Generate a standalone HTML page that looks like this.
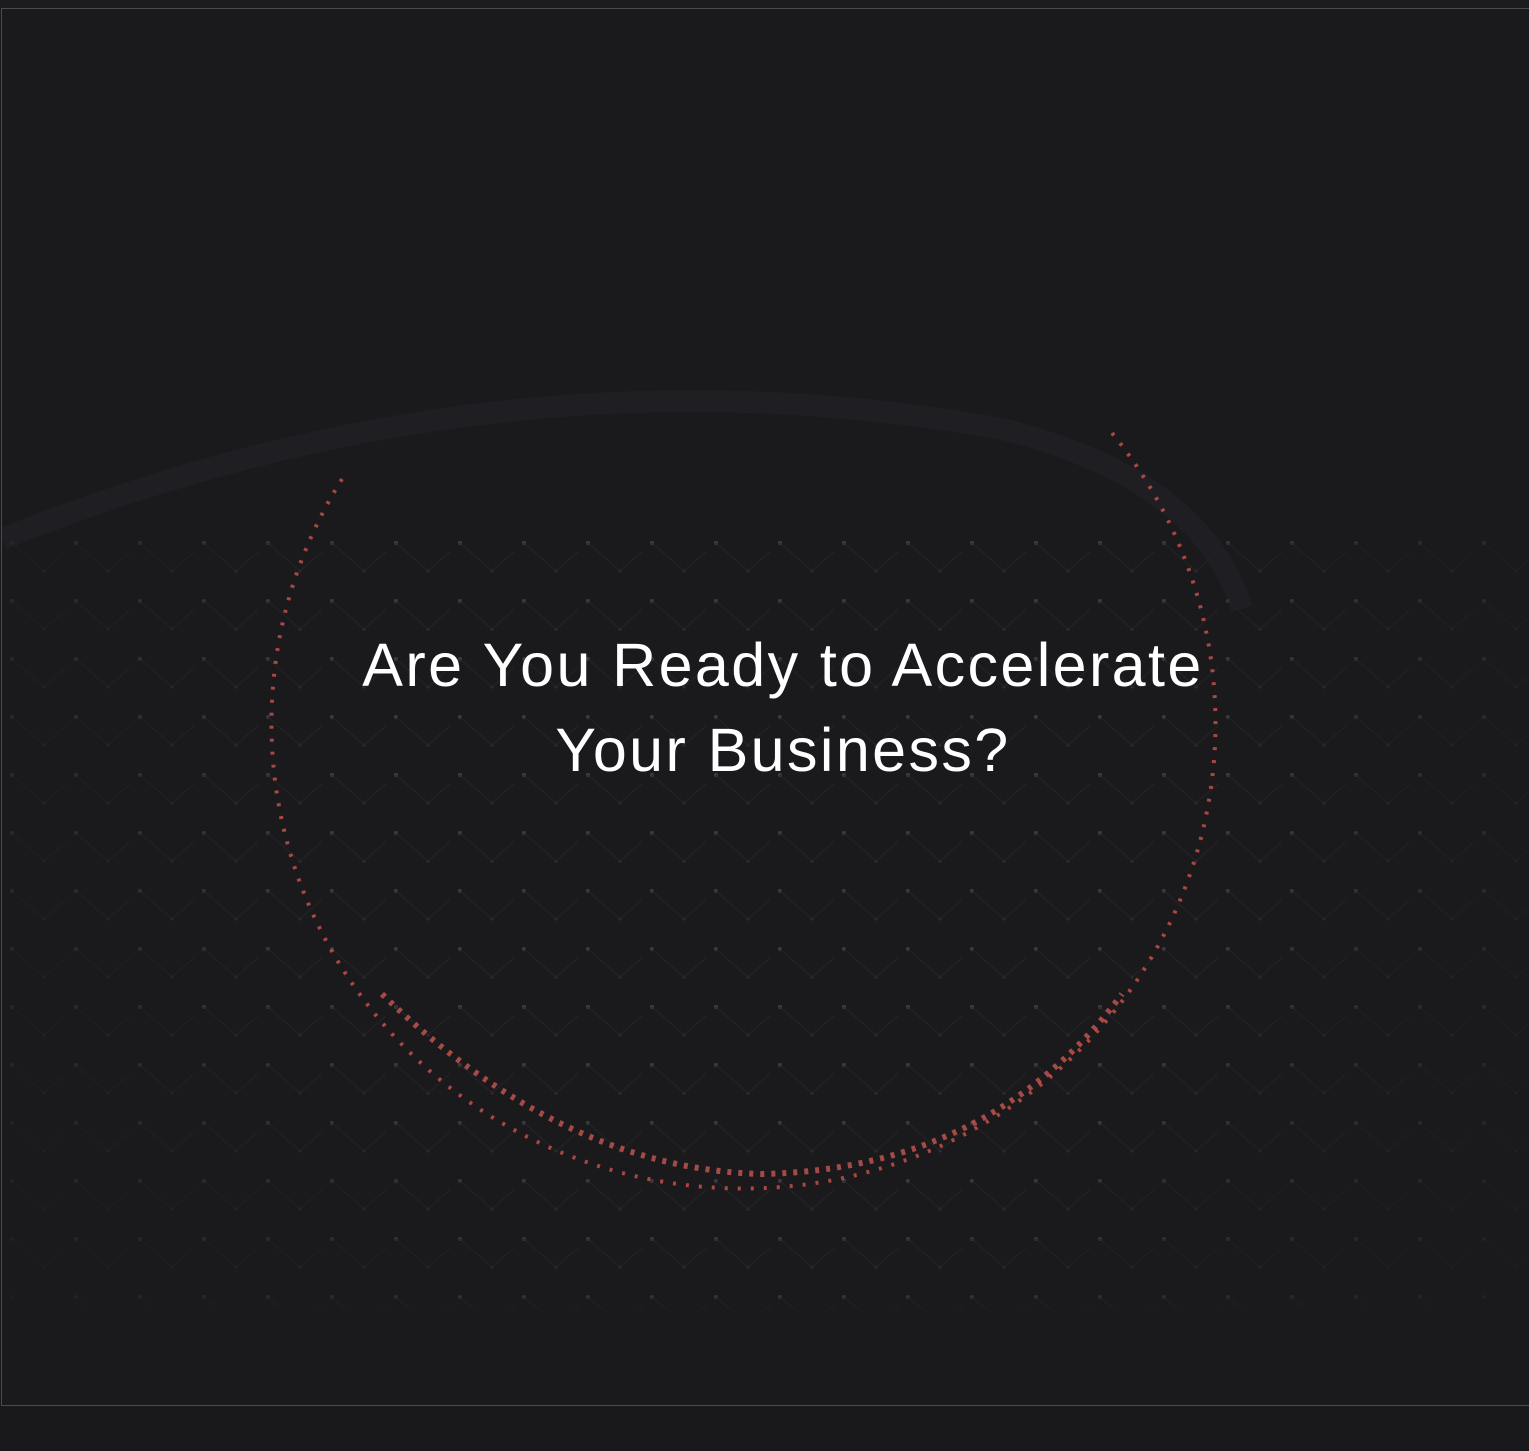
<!DOCTYPE html>
<html><head><meta charset="utf-8"><style>
html,body{margin:0;padding:0;background:#19191b;width:1529px;height:1451px;overflow:hidden}
.box{position:absolute;left:1px;top:8px;width:1528px;height:1396px;border-top:1px solid #4a4a4f;border-left:1px solid #4a4a4f;border-bottom:1px solid #4a4a4f;background:#1a191c;overflow:hidden}
.top{position:absolute;left:0;top:0;width:1529px;height:8px;background:#1c1c1e}
h1{position:absolute;left:0;top:614px;width:1562px;margin:0;text-align:center;font-family:"Liberation Sans",sans-serif;font-weight:400;font-size:61px;line-height:85px;color:#fff;letter-spacing:2.4px}
</style></head><body>
<div class="top"></div>
<div class="box">
<svg width="1528" height="1396" style="position:absolute;left:0;top:0">
<defs>
<pattern id="g" width="64" height="58" patternUnits="userSpaceOnUse">
<circle cx="10" cy="12" r="2" fill="#48484c"/>
<circle cx="42" cy="40" r="1.5" fill="#3a3a3e"/>
<path d="M10 12 L42 40 L74 12" stroke="#28282c" stroke-width="1" fill="none"/>
</pattern>
<radialGradient id="v" cx="0.5" cy="0.55" r="0.65"><stop offset="0.45" stop-color="#1a191c" stop-opacity="0"/><stop offset="1" stop-color="#1a191c" stop-opacity="0.9"/></radialGradient>
</defs>
<rect x="0" y="520" width="1528" height="780" fill="url(#g)" opacity="0.75"/>
<rect width="1528" height="1396" fill="url(#v)"/>
<path d="M0 530 Q500 330 1000 420 Q1200 470 1240 600" stroke="#242428" stroke-width="22" fill="none" opacity="0.5"/>
<path d="M340 470 A472 465 0 1 0 1110 424" fill="none" stroke="#d9574f" stroke-width="4" stroke-dasharray="3 10" opacity="0.75"/>
<path d="M380 985 Q560 1160 760 1165 Q990 1160 1120 985" stroke="#e0605a" stroke-width="6" fill="none" stroke-dasharray="4 7" opacity="0.7"/>
</svg>
<h1>Are You Ready to Accelerate<br>Your Business?</h1>
</div>
</body></html>
